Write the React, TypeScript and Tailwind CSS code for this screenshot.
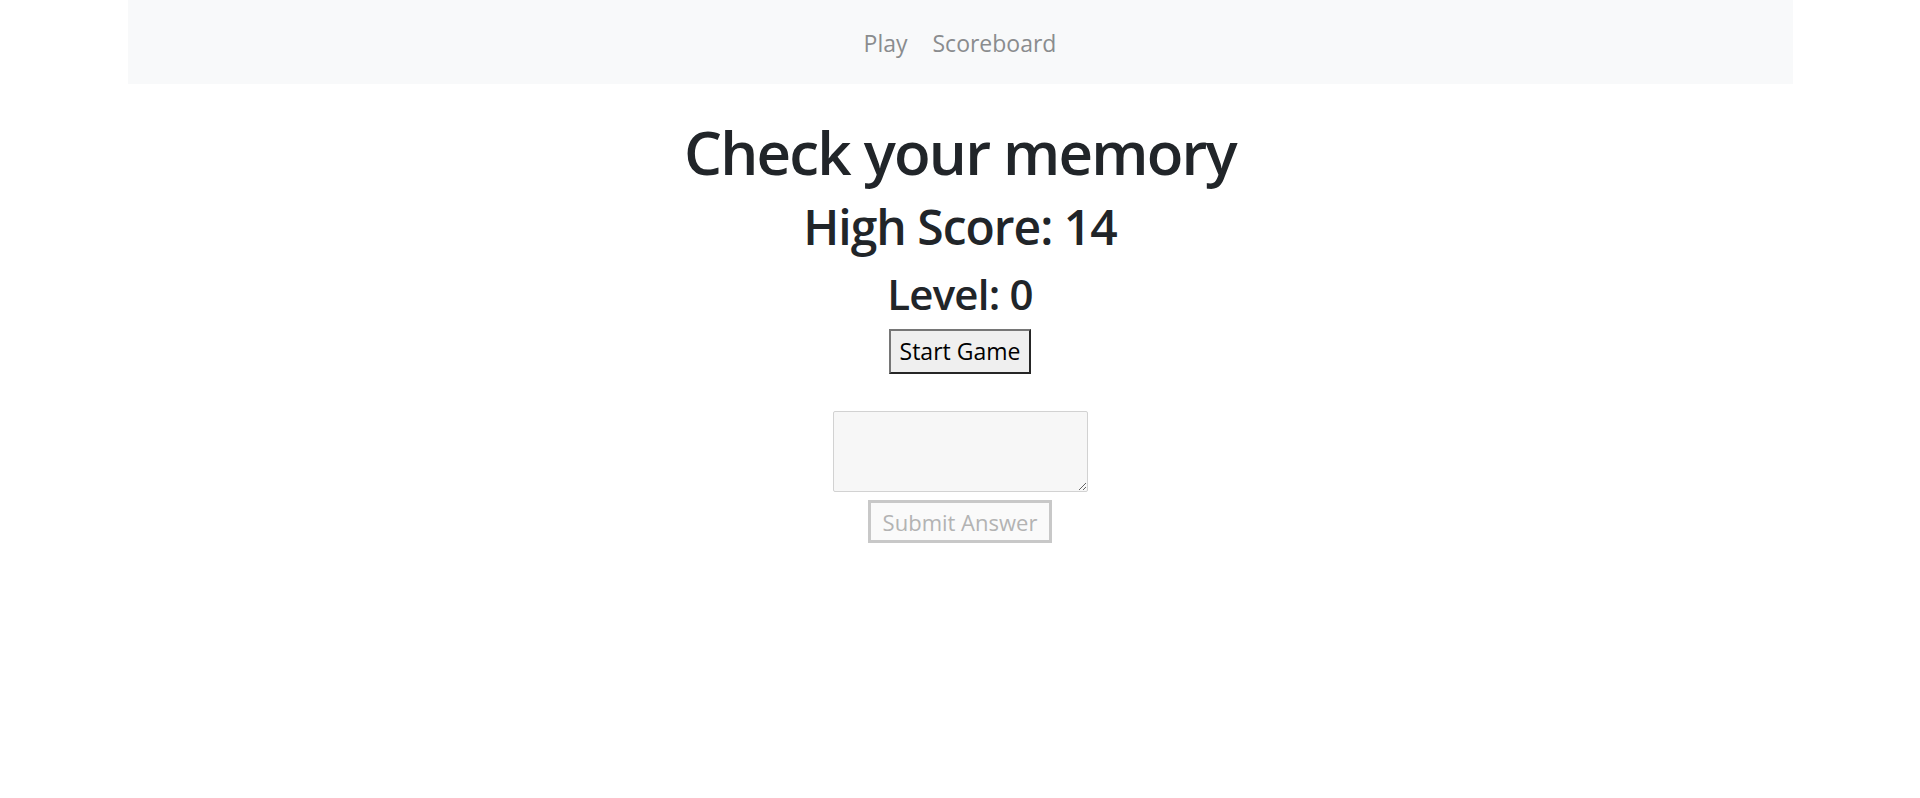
const NAV = ["Play", "Scoreboard"];

export default function App() {
  return (
    <div className="min-h-[798px] bg-white font-['Open_Sans',sans-serif] text-[#212529]">
      <nav className="mx-auto flex h-[84px] w-[1665px] items-center justify-center gap-[25px] bg-[#f8f9fa]">
        {NAV.map((label) => (
          <a key={label} className="pt-[2px] text-[23px] leading-none text-[#8a8c8e]">
            {label}
          </a>
        ))}
      </nav>

      <main className="flex flex-col items-center">
        <h1 className="mt-[32px] text-[60px] font-semibold leading-[72px] tracking-[-1.8px]">Check your memory</h1>
        <h2 className="mt-[10px] text-[48px] font-semibold leading-[58px] tracking-[-1px]">High Score: 14</h2>
        <h3 className="mt-[13px] text-[42px] font-semibold leading-[50px] tracking-[-0.8px]">Level: 0</h3>
        <button className="mt-[10px] h-[45px] w-[142px] border-2 border-t-[#767676] border-l-[#767676] border-b-[#262626] border-r-[#262626] bg-[#efefef] text-[23px] leading-none text-black">
          Start Game
        </button>
        <textarea
          disabled
          className="mt-[37px] h-[81px] w-[255px] rounded-[2px] border border-[#d2d2d2] bg-[#f7f7f7]"
        />
        <button
          disabled
          className="mt-[8px] h-[43px] w-[184px] border-[3px] border-[#c8c8c8] bg-[#fafafa] text-[22px] leading-none text-[#b3b3b3]"
        >
          Submit Answer
        </button>
      </main>
    </div>
  );
}
